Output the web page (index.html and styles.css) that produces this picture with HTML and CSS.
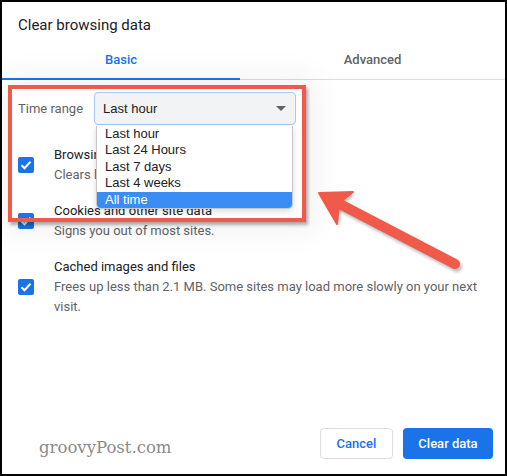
FILE: index.html
```html
<!DOCTYPE html>
<html lang="en">
<head>
<meta charset="UTF-8">
<title>Clear browsing data</title>
<link rel="stylesheet" href="styles.css">
</head>
<body>
<div class="dialog">
    <h1 class="title">Clear browsing data</h1>

    <div class="tabs">
        <div class="tab active">Basic</div>
        <div class="tab">Advanced</div>
    </div>

    <div class="content">
        <div class="range-row">
            <label class="range-label">Time range</label>
            <div class="select">
                <span>Last hour</span>
                <span class="caret"></span>
            </div>
        </div>

        <div class="item">
            <span class="checkbox"><svg viewBox="0 0 16 16" width="16" height="16"><path d="M3.5 8.2l3 3 6-6.4" fill="none" stroke="#fff" stroke-width="2"/></svg></span>
            <div class="item-text">
                <div class="item-title">Browsing history</div>
                <div class="item-desc">Clears history from all devices.</div>
            </div>
        </div>

        <div class="item">
            <span class="checkbox"><svg viewBox="0 0 16 16" width="16" height="16"><path d="M3.5 8.2l3 3 6-6.4" fill="none" stroke="#fff" stroke-width="2"/></svg></span>
            <div class="item-text">
                <div class="item-title">Cookies and other site data</div>
                <div class="item-desc">Signs you out of most sites.</div>
            </div>
        </div>

        <div class="item">
            <span class="checkbox"><svg viewBox="0 0 16 16" width="16" height="16"><path d="M3.5 8.2l3 3 6-6.4" fill="none" stroke="#fff" stroke-width="2"/></svg></span>
            <div class="item-text">
                <div class="item-title">Cached images and files</div>
                <div class="item-desc">Frees up less than 2.1 MB. Some sites may load more slowly on your next visit.</div>
            </div>
        </div>
    </div>

    <div class="footer">
        <span class="watermark">groovyPost.com</span>
        <button class="btn cancel">Cancel</button>
        <button class="btn primary">Clear data</button>
    </div>

    <!-- open dropdown list -->
    <ul class="dropdown">
        <li>Last hour</li>
        <li>Last 24 Hours</li>
        <li>Last 7 days</li>
        <li>Last 4 weeks</li>
        <li class="selected">All time</li>
    </ul>

    <!-- annotation: red frame and arrow -->
    <div class="highlight-box"></div>
    <svg class="arrow" width="503" height="472" viewBox="0 0 503 472">
        <g transform="translate(-2 -2)">
            <g class="arrow-shadow" transform="translate(2 3)">
                <line x1="455" y1="264" x2="336" y2="202" stroke="rgba(0,0,0,0.25)" stroke-width="10" stroke-linecap="round"/>
                <polygon points="319,193 353,192 339,203 337,224" fill="rgba(0,0,0,0.25)"/>
            </g>
            <line x1="455" y1="264" x2="336" y2="202" stroke="#f05a4a" stroke-width="10" stroke-linecap="round"/>
            <polygon points="319,193 353,192 339,203 337,224" fill="#f05a4a" stroke="#f05a4a" stroke-width="2" stroke-linejoin="round"/>
        </g>
    </svg>
</div>
</body>
</html>
```

FILE: styles.css
```css
body {
    margin: 0;
    background: #fff;
}
.dialog {
    position: relative;
    width: 507px;
    height: 476px;
    box-sizing: border-box;
    border: 2px solid #000;
    display: flex;
    flex-direction: column;
    font-family: Roboto, "Liberation Sans", sans-serif;
    font-size: 13px;
    color: #202124;
    background: #fff;
}
.title {
    margin: 0;
    padding: 13px 16px 9px;
    font-size: 15px;
    font-weight: 400;
    line-height: 20px;
}
.tabs {
    display: grid;
    grid-template-columns: 238px 1fr;
}
.tab {
    text-align: center;
    font-weight: 500;
    line-height: 20px;
    color: #5f6368;
    padding: 6px 0 9px;
    border-bottom: 1px solid #dadce0;
}
.tab.active {
    color: #1a73e8;
    padding-bottom: 8px;
    border-bottom: 2px solid #1a73e8;
}
.content {
    padding: 12px 16px 0;
}
.range-row {
    display: flex;
    align-items: center;
    gap: 11px;
}
.range-label {
    color: #5f6368;
}
.select {
    box-sizing: border-box;
    width: 202px;
    height: 33px;
    padding: 0 8px;
    border: 1px solid #a8c7fa;
    border-radius: 4px;
    background: #f1f3f4;
    display: flex;
    align-items: center;
    justify-content: space-between;
    font-family: "Liberation Sans", Arial, sans-serif;
    font-size: 13px;
    color: #202124;
}
.caret {
    width: 0;
    height: 0;
    border-left: 5px solid transparent;
    border-right: 5px solid transparent;
    border-top: 5px solid #5f6368;
    margin-right: 1px;
}
.item {
    display: flex;
    align-items: center;
    gap: 20px;
    margin-top: 16px;
}
.range-row + .item {
    margin-top: 20px;
}
.checkbox {
    flex: none;
    width: 16px;
    height: 16px;
    border-radius: 2px;
    background: #1a73e8;
}
.checkbox svg {
    display: block;
}
.item-text {
    line-height: 20px;
}
.item-desc {
    color: #5f6368;
}
.footer {
    margin-top: auto;
    display: flex;
    align-items: center;
    gap: 10px;
    padding: 0 12px 15px 37px;
}
.watermark {
    margin-right: auto;
    margin-top: 8px;
    font-family: "DejaVu Serif", "Liberation Serif", serif;
    font-size: 16.5px;
    color: #8a8a8a;
}
.btn {
    height: 31px;
    padding: 0;
    border-radius: 4px;
    font-family: Roboto, sans-serif;
    font-size: 13px;
    font-weight: 500;
    cursor: pointer;
}
.cancel {
    width: 73px;
    background: #fff;
    color: #1a73e8;
    border: 1px solid #dadce0;
}
.primary {
    width: 90px;
    background: #1a73e8;
    color: #fff;
    border: none;
}
.dropdown {
    position: absolute;
    left: 94px;
    top: 124px;
    width: 197px;
    margin: 0;
    padding: 0;
    list-style: none;
    background: #fff;
    border: 1px solid #c8c8c8;
    border-top: none;
    border-radius: 0 0 5px 5px;
    overflow: hidden;
    box-sizing: border-box;
    font-family: "Liberation Sans", Arial, sans-serif;
    font-size: 13px;
    line-height: 16.4px;
    color: #202124;
    box-shadow: 0 2px 6px rgba(0, 0, 0, 0.15);
}
.dropdown li {
    padding-left: 8px;
}
.dropdown .selected {
    background: #3b8df6;
    color: #fff;
}
.highlight-box {
    position: absolute;
    left: 6px;
    top: 83px;
    width: 298px;
    height: 137px;
    box-sizing: border-box;
    border: 4.5px solid #f05a4a;
    box-shadow: 2px 3px 3px rgba(0, 0, 0, 0.3), 0 0 30px 8px rgba(0, 0, 0, 0.06);
}
.arrow {
    position: absolute;
    left: 0;
    top: 0;
    pointer-events: none;
}
.arrow-shadow {
    filter: blur(1.5px);
}
```
